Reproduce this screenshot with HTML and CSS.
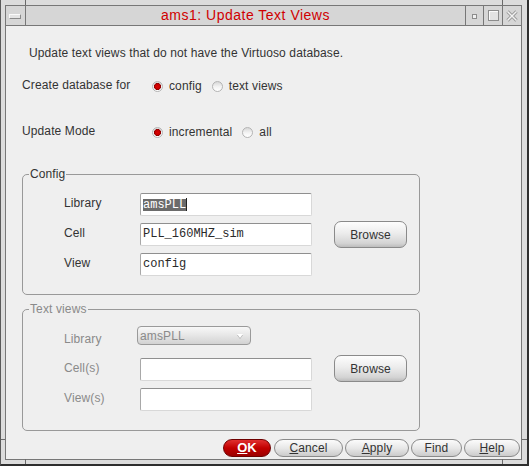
FILE: index.html
```html
<!DOCTYPE html>
<html lang="en">
<head>
<meta charset="utf-8">
<title>ams1: Update Text Views</title>
<link rel="stylesheet" href="styles.css">
</head>
<body>
<div class="frame">
  <span class="notch notch-top-l"></span>
  <span class="notch notch-top-r"></span>
  <span class="notch notch-bot-l"></span>
  <span class="notch notch-bot-r"></span>
  <span class="notch notch-side-l"></span>
  <span class="notch notch-side-r"></span>
  <div class="window">
    <div class="titlebar">
      <div class="tb-btn tb-menu"><span class="menu-glyph"></span></div>
      <div class="tb-title">ams1: Update Text Views</div>
      <div class="tb-btn tb-min"><span class="min-glyph"></span></div>
      <div class="tb-btn tb-max"><span class="max-glyph"></span></div>
      <div class="tb-btn tb-close">
        <svg class="close-glyph" width="12" height="12" viewBox="0 0 12 12">
          <path d="M1.5 1.5 L10.5 10.5 M10.5 1.5 L1.5 10.5" stroke="#9a9a9a" stroke-width="3.2" fill="none"/>
          <path d="M1.5 1.5 L10.5 10.5 M10.5 1.5 L1.5 10.5" stroke="#f2f2f2" stroke-width="1.4" fill="none"/>
        </svg>
      </div>
    </div>
    <div class="content">
      <p class="desc">Update text views that do not have the Virtuoso database.</p>
      <div class="opt-row row-create">
        <span class="opt-label">Create database for</span>
        <span class="opt"><span class="radio on"></span>config</span>
        <span class="opt"><span class="radio"></span>text views</span>
      </div>
      <div class="opt-row row-mode">
        <span class="opt-label">Update Mode</span>
        <span class="opt"><span class="radio on"></span>incremental</span>
        <span class="opt"><span class="radio"></span>all</span>
      </div>

      <fieldset class="group group-config">
        <legend>Config</legend>
        <div class="grid">
          <span class="flabel">Library</span>
          <div class="field"><span class="sel">amsPLL</span><span class="caret"></span></div>
          <span class="flabel">Cell</span>
          <div class="field">PLL_160MHZ_sim</div>
          <span class="flabel">View</span>
          <div class="field">config</div>
          <button class="browse">Browse</button>
        </div>
      </fieldset>

      <fieldset class="group group-text disabled">
        <legend>Text views</legend>
        <div class="grid grid-text">
          <span class="flabel flabel-combo">Library</span>
          <div class="combo"><span class="combo-text">amsPLL</span><span class="combo-arrow"></span></div>
          <span class="flabel">Cell(s)</span>
          <div class="field"></div>
          <span class="flabel">View(s)</span>
          <div class="field"></div>
          <button class="browse">Browse</button>
        </div>
      </fieldset>

      <div class="buttons">
        <button class="btn btn-ok"><u>O</u>K</button>
        <button class="btn btn-cancel"><u>C</u>ancel</button>
        <button class="btn btn-apply"><u>A</u>pply</button>
        <button class="btn btn-find">Find</button>
        <button class="btn btn-help"><u>H</u>elp</button>
      </div>
    </div>
  </div>
</div>
</body>
</html>
```
FILE: styles.css
```css
* { box-sizing: border-box; }
html, body { margin: 0; padding: 0; }
body {
  background: #dcdcdc;
  font-family: "Liberation Sans", Arial, sans-serif;
  font-size: 12px;
  letter-spacing: 0.12px;
  color: #333;
}
.frame {
  position: relative;
  width: 529px;
  height: 466px;
  background: #dcdcdc;
  border-left: 1px solid #5a5a5a;
  border-right: 2px solid #2e2e2e;
  border-bottom: 2px solid #2e2e2e;
  padding: 5px 5px 4px 4px;
}
.notch { position: absolute; background: #6a6a6a; }
.notch-top-l { left: 24px; top: 0; width: 1px; height: 5px; }
.notch-top-r { left: 501px; top: 0; width: 1px; height: 5px; }
.notch-bot-l { left: 24px; bottom: 0; width: 1px; height: 5px; }
.notch-bot-r { left: 501px; bottom: 0; width: 1px; height: 5px; }
.notch-side-l { left: 0; top: 439px; width: 4px; height: 1px; }
.notch-side-r { right: 0; top: 439px; width: 5px; height: 1px; }

.window {
  width: 100%;
  height: 100%;
  border: 1px solid #777;
  display: flex;
  flex-direction: column;
  background: #efefef;
}
.titlebar {
  display: flex;
  height: 20px;
  flex: none;
  background: #d6d6d6;
  border-bottom: 1px solid #777;
}
.tb-btn {
  display: flex;
  align-items: center;
  justify-content: center;
  border-right: 1px solid #777;
}
.tb-menu { width: 20px; }
.tb-title {
  flex: 1;
  text-align: center;
  color: #d00000;
  font-size: 14px;
  letter-spacing: 0.5px;
  line-height: 19px;
  border-right: 1px solid #777;
}
.tb-min { width: 18px; }
.tb-max { width: 19px; }
.tb-close { width: 18px; border-right: none; }
.menu-glyph {
  width: 12px;
  height: 5px;
  border: 1px solid #8a8a8a;
  border-top-color: #fafafa;
  border-left-color: #fafafa;
  background: #e4e4e4;
  margin-top: 1px;
  margin-right: 1px;
}
.min-glyph {
  width: 5px;
  height: 5px;
  border: 1px solid #8c8c8c;
  background: #f0f0f0;
  margin-top: 2px;
}
.max-glyph {
  width: 11px;
  height: 11px;
  border: 1px solid #8c8c8c;
  box-shadow: inset 1px 1px 0 #fafafa;
  background: #e2e2e2;
}
.close-glyph { display: block; }

.content {
  flex: 1;
  padding: 20px 0 0 16px;
  display: flex;
  flex-direction: column;
}
.desc {
  margin: 0 0 0 7px;
  line-height: 14px;
}
.opt-row {
  display: flex;
  align-items: center;
  height: 20px;
}
.row-create { margin-top: 15px; }
.row-mode { margin-top: 26px; }
.opt-label { width: 130px; }
.opt {
  display: inline-flex;
  align-items: center;
  gap: 6px;
  margin-right: 10px;
  margin-top: 2px;
}
.radio {
  width: 11px;
  height: 11px;
  border-radius: 50%;
  border: 1px solid #b4b4b4;
  background: linear-gradient(#d8d8d8, #f4f4f4 55%, #ffffff);
  margin-top: 1px;
}
.radio.on {
  background: radial-gradient(circle at 50% 50%, #e00000 0, #c00000 2.6px, #8a0000 3.2px, transparent 3.8px),
              linear-gradient(#d8d8d8, #f4f4f4 55%, #ffffff);
}

.group {
  margin: 0;
  width: 398px;
  min-width: 0;
  border: 1px solid #999;
  border-radius: 5px;
  padding: 0;
}
.group legend {
  margin-left: 6px;
  padding: 0 1px;
  line-height: 14px;
  font-size: 12px;
}
.group-config { margin-top: 26px; }
.group-text { margin-top: 7px; }
.disabled legend, .disabled .flabel { color: #8a8a8a; }

.grid {
  display: grid;
  grid-template-columns: 76px 172px 22px 73px;
  grid-template-rows: 23px 23px 23px;
  row-gap: 7px;
  align-items: center;
  padding: 12px 0 18px 41px;
}
.grid-text {
  grid-template-rows: 25px 23px 23px;
  padding: 10px 0 19px 41px;
}
.flabel { line-height: 14px; grid-column: 1; margin-bottom: 4px; }
.flabel-combo { margin-bottom: 0; }
.field {
  grid-column: 2;
  height: 23px;
  background: #fff;
  border: 1px solid #d8d8d8;
  border-top-color: #8f8f8f;
  border-left-color: #a8a8a8;
  border-radius: 2px;
  font-family: "Liberation Mono", "Courier New", monospace;
  font-size: 12px;
  letter-spacing: 0;
  color: #2a2a2a;
  line-height: 21px;
  padding-left: 2px;
  display: flex;
  align-items: center;
}
.sel {
  background: #6b6b6b;
  color: #fff;
  line-height: 12px;
}
.caret {
  width: 1px;
  height: 13px;
  background: #222;
}
.browse {
  grid-column: 4;
  grid-row: 1 / 4;
  align-self: center;
  width: 73px;
  height: 27px;
  border: 1px solid #8a8a8a;
  border-radius: 7px;
  background: linear-gradient(#fdfdfd, #ececec 45%, #d4d4d4 85%, #bcbcbc);
  font-family: "Liberation Sans", Arial, sans-serif;
  font-size: 12px;
  letter-spacing: 0.12px;
  color: #333;
  padding: 0;
}
.combo {
  grid-column: 2;
  align-self: start;
  margin-left: -3px;
  width: 114px;
  height: 19px;
  border: 1px solid #9a9a9a;
  border-radius: 4px;
  background: linear-gradient(#f8f8f8, #e6e6e6 50%, #d2d2d2);
  display: flex;
  align-items: center;
}
.combo-text {
  flex: 1;
  color: #8a8a8a;
  padding-left: 2px;
}
.combo-arrow {
  width: 0;
  height: 0;
  border-left: 3px solid transparent;
  border-right: 3px solid transparent;
  border-top: 4px solid #ffffff;
  margin-right: 7px;
  filter: drop-shadow(0 1px 0 #b0b0b0);
}

.buttons {
  display: flex;
  justify-content: flex-end;
  gap: 2px;
  margin-top: 8px;
  padding-right: 1px;
}
.btn {
  height: 18px;
  border: 1px solid #8a8a8a;
  border-radius: 9px;
  background: linear-gradient(#fbfbfb, #e8e8e8 50%, #cbcbcb);
  font-family: "Liberation Sans", Arial, sans-serif;
  font-size: 12px;
  letter-spacing: 0.12px;
  color: #333;
  padding: 0;
  line-height: 16px;
}
.btn-ok {
  width: 48px;
  margin-right: 1px;
  background: linear-gradient(#e03030, #c20000 50%, #9c0000);
  border-color: #6e0000;
  color: #fff;
  font-weight: bold;
  font-size: 13px;
}
.btn-cancel { width: 69px; }
.btn-apply { width: 64px; }
.btn-find { width: 51px; }
.btn-help { width: 56px; }
```
